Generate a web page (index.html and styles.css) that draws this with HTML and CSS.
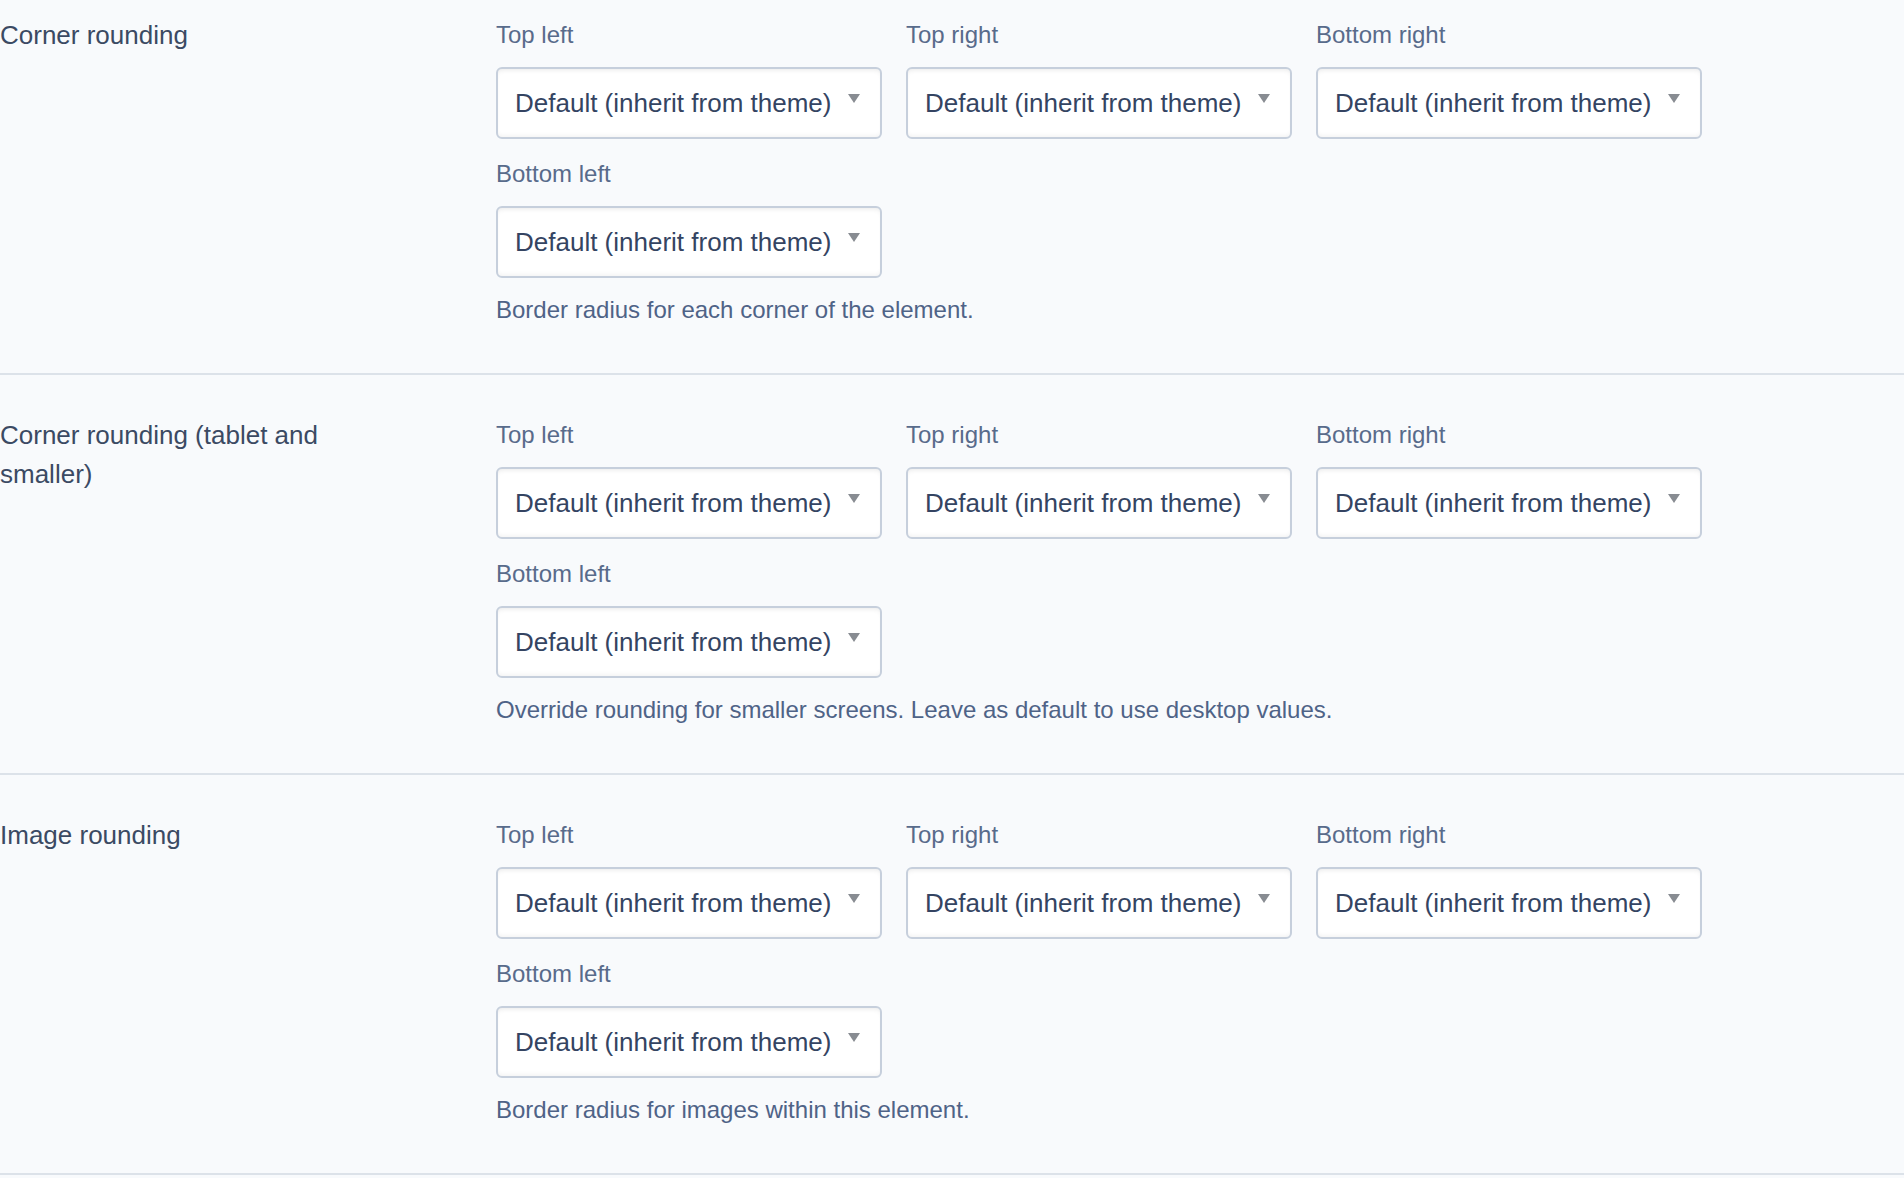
FILE: index.html
```html
<!DOCTYPE html>
<html lang="en">
<head>
<meta charset="utf-8">
<title>Rounding settings</title>
<link rel="stylesheet" href="styles.css">
</head>
<body>
<div class="settings">
  <section class="setting">
    <div class="setting-label">Corner rounding</div>
    <div class="setting-body">
      <div class="fields">
        <div class="field"><label class="field-label">Top left</label><div class="select"><select><option>Default (inherit from theme)</option></select><svg class="arrow" width="12" height="9" viewBox="0 0 12 9"><path d="M0 0H12L6 9Z"/></svg></div></div>
        <div class="field"><label class="field-label">Top right</label><div class="select"><select><option>Default (inherit from theme)</option></select><svg class="arrow" width="12" height="9" viewBox="0 0 12 9"><path d="M0 0H12L6 9Z"/></svg></div></div>
        <div class="field"><label class="field-label">Bottom right</label><div class="select"><select><option>Default (inherit from theme)</option></select><svg class="arrow" width="12" height="9" viewBox="0 0 12 9"><path d="M0 0H12L6 9Z"/></svg></div></div>
        <div class="field"><label class="field-label">Bottom left</label><div class="select"><select><option>Default (inherit from theme)</option></select><svg class="arrow" width="12" height="9" viewBox="0 0 12 9"><path d="M0 0H12L6 9Z"/></svg></div></div>
      </div>
      <p class="help">Border radius for each corner of the element.</p>
    </div>
  </section>
  <section class="setting">
    <div class="setting-label">Corner rounding (tablet and smaller)</div>
    <div class="setting-body">
      <div class="fields">
        <div class="field"><label class="field-label">Top left</label><div class="select"><select><option>Default (inherit from theme)</option></select><svg class="arrow" width="12" height="9" viewBox="0 0 12 9"><path d="M0 0H12L6 9Z"/></svg></div></div>
        <div class="field"><label class="field-label">Top right</label><div class="select"><select><option>Default (inherit from theme)</option></select><svg class="arrow" width="12" height="9" viewBox="0 0 12 9"><path d="M0 0H12L6 9Z"/></svg></div></div>
        <div class="field"><label class="field-label">Bottom right</label><div class="select"><select><option>Default (inherit from theme)</option></select><svg class="arrow" width="12" height="9" viewBox="0 0 12 9"><path d="M0 0H12L6 9Z"/></svg></div></div>
        <div class="field"><label class="field-label">Bottom left</label><div class="select"><select><option>Default (inherit from theme)</option></select><svg class="arrow" width="12" height="9" viewBox="0 0 12 9"><path d="M0 0H12L6 9Z"/></svg></div></div>
      </div>
      <p class="help">Override rounding for smaller screens. Leave as default to use desktop values.</p>
    </div>
  </section>
  <section class="setting">
    <div class="setting-label">Image rounding</div>
    <div class="setting-body">
      <div class="fields">
        <div class="field"><label class="field-label">Top left</label><div class="select"><select><option>Default (inherit from theme)</option></select><svg class="arrow" width="12" height="9" viewBox="0 0 12 9"><path d="M0 0H12L6 9Z"/></svg></div></div>
        <div class="field"><label class="field-label">Top right</label><div class="select"><select><option>Default (inherit from theme)</option></select><svg class="arrow" width="12" height="9" viewBox="0 0 12 9"><path d="M0 0H12L6 9Z"/></svg></div></div>
        <div class="field"><label class="field-label">Bottom right</label><div class="select"><select><option>Default (inherit from theme)</option></select><svg class="arrow" width="12" height="9" viewBox="0 0 12 9"><path d="M0 0H12L6 9Z"/></svg></div></div>
        <div class="field"><label class="field-label">Bottom left</label><div class="select"><select><option>Default (inherit from theme)</option></select><svg class="arrow" width="12" height="9" viewBox="0 0 12 9"><path d="M0 0H12L6 9Z"/></svg></div></div>
      </div>
      <p class="help">Border radius for images within this element.</p>
    </div>
  </section>
</div>
</body>
</html>
```

FILE: styles.css
```css
html, body {
  margin: 0;
  padding: 0;
  background: #f8fafc;
}

body {
  font-family: "Liberation Sans", Arial, Helvetica, sans-serif;
  color: #3b4a63;
  overflow: hidden;
}

.settings {
  display: flex;
  flex-direction: column;
}

.setting {
  display: grid;
  grid-template-columns: 496px 1fr;
  padding: 42px 0 45px;
  border-bottom: 2px solid #dce2e9;
}

.setting:first-child {
  padding-top: 17px;
}

.setting-label {
  font-size: 26px;
  line-height: 39px;
  color: #3b4a63;
  max-width: 380px;
  margin-top: -1px;
}

.setting-body {
  display: flex;
  flex-direction: column;
}

.fields {
  display: grid;
  grid-template-columns: repeat(3, 386px);
  column-gap: 24px;
  row-gap: 17px;
}

.field {
  display: flex;
  flex-direction: column;
}

.field-label {
  font-size: 24px;
  line-height: 36px;
  color: #586b8b;
  margin-bottom: 14px;
}

.select {
  position: relative;
  height: 72px;
}

.select select {
  appearance: none;
  -webkit-appearance: none;
  width: 100%;
  height: 100%;
  box-sizing: border-box;
  margin: 0;
  border: 2px solid #c6cfdc;
  border-radius: 6px;
  background: #ffffff;
  box-shadow: inset 0 4px 5px -3px rgba(0, 0, 0, 0.09), inset 0 -4px 5px -3px rgba(0, 0, 0, 0.06);
  padding: 0 40px 0 17px;
  font-family: "Liberation Sans", Arial, Helvetica, sans-serif;
  font-size: 26px;
  color: #344462;
  outline: none;
}

.arrow {
  position: absolute;
  right: 22px;
  top: 27px;
  fill: #888c92;
  pointer-events: none;
}

.help {
  margin: 14px 0 0;
  font-size: 24px;
  line-height: 36px;
  color: #4f6387;
}
```
